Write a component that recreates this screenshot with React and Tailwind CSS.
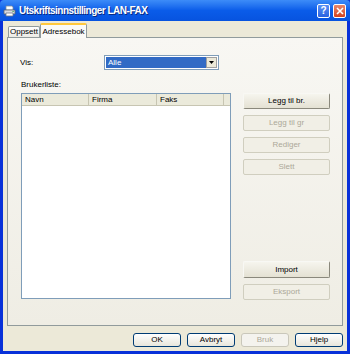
import React from 'react';

const font = { fontFamily: '"Liberation Sans", Arial, sans-serif' };

const PrinterIcon = () => (
  <svg width="13" height="12" viewBox="0 0 13 12">
    <path d="M3 1h6l1 1v3H3z" fill="#fff" stroke="#7a8aa0" strokeWidth="0.8" />
    <path d="M1 5h11v4H1z" fill="#d7dbe2" stroke="#5b6472" strokeWidth="0.8" />
    <path d="M3 8h7v3H3z" fill="#fff" stroke="#6c7685" strokeWidth="0.8" />
    <rect x="9.5" y="6" width="1.2" height="1" fill="#3fa33f" />
  </svg>
);

const XpButton = ({ children, disabled, className = '' }) => (
  <div
    className={`flex items-center justify-center rounded-[2px] border text-[8px] leading-none ${
      disabled
        ? 'border-[#d0cebf] text-[#aca899] bg-[#f1efe6]'
        : 'border-t-[#f8f8f4] border-l-[#f8f8f4] border-b-[#8a887c] border-r-[#8a887c] text-black bg-gradient-to-b from-[#f6f5ee] to-[#e4e1d3]'
    } ${className}`}
  >
    {children}
  </div>
);

const DialogButton = ({ children, disabled }) => (
  <div
    className={`flex h-[14px] w-[48px] items-center justify-center rounded-[3px] border text-[8px] leading-none ${
      disabled
        ? 'border-[#c9c7ba] text-[#aca899] bg-[#f4f3ee]'
        : 'border-[#003c74] text-black bg-gradient-to-b from-[#ffffff] to-[#e8e6dc]'
    }`}
  >
    {children}
  </div>
);

export default function App() {
  return (
    <div className="flex h-[354px] w-[350px] flex-col overflow-hidden bg-[#0831d9]" style={font}>
      {/* title bar */}
      <div className="flex h-[21px] items-center rounded-t-[4px] bg-gradient-to-b from-[#3d8cf8] via-[#0a5ce9] to-[#0753df] pl-[3px] pr-[4px]">
        <PrinterIcon />
        <span className="ml-[3px] text-[10px] font-bold tracking-[-0.5px] text-white [text-shadow:1px_1px_0_#0a2a80]">
          Utskriftsinnstillinger LAN-FAX
        </span>
        <div className="ml-auto flex gap-[3px]">
          <div className="flex h-[14px] w-[13px] items-center justify-center rounded-[2px] border border-white bg-gradient-to-b from-[#5a90f5] to-[#2b62e0] text-[10px] font-bold leading-none text-white">
            ?
          </div>
          <div className="flex h-[14px] w-[13px] items-center justify-center rounded-[2px] border border-white bg-gradient-to-b from-[#e8876b] to-[#d2411c]">
            <svg width="8" height="8" viewBox="0 0 8 8">
              <path d="M1 1l6 6M7 1L1 7" stroke="#fff" strokeWidth="1.6" />
            </svg>
          </div>
        </div>
      </div>

      {/* body */}
      <div className="mx-[3px] mb-[3px] flex flex-1 flex-col bg-[#ece9d8] pt-[2px]">
        {/* tabs */}
        <div className="relative z-10 flex h-[14px] items-end pl-[5px]">
          <div className="flex h-[11px] w-[32px] items-center justify-center rounded-t-[2px] border border-b-0 border-[#919b9c] bg-gradient-to-b from-[#fefefe] to-[#ecebe5] text-[8px] leading-none">
            Oppsett
          </div>
          <div className="-mb-px flex h-[15px] w-[47px] items-center justify-center rounded-t-[2px] border-x border-[#919b9c] border-t-2 border-t-[#ffc83c] bg-[#fafaf7] text-[8px] leading-none">
            Adressebok
          </div>
        </div>

        {/* tab page */}
        <div className="ml-[4px] flex h-[289px] w-[336px] flex-col border border-[#919b9c] bg-gradient-to-b from-[#f8f7f3] to-[#efede4]">
          <div className="mt-[17px] flex items-center">
            <span className="ml-[12px] w-[84px] text-[8px] leading-none">Vis:</span>
            <div className="flex h-[15px] w-[115px] items-center border border-[#7f9db9] bg-white p-px">
              <div className="flex h-full flex-1 items-center bg-[#316ac5] pl-[2px] text-[8px] leading-none text-white">
                Alle
              </div>
              <div className="flex h-full w-[11px] items-center justify-center border border-[#a0a0a0] bg-[#ece9d8]">
                <svg width="5" height="3" viewBox="0 0 5 3">
                  <path d="M0 0h5L2.5 3z" fill="#000" />
                </svg>
              </div>
            </div>
          </div>

          <div className="ml-[13px] mt-[10px] h-[10px] text-[8px] leading-[10px]">Brukerliste:</div>

          <div className="mt-[3px] flex">
            <div className="ml-[13px] flex h-[206px] w-[210px] flex-col border border-[#7f9db9] bg-white">
              <div className="flex h-[12px] text-[8px] leading-none">
                <div className="flex w-[67px] items-center border-b border-r border-[#c7c5b2] bg-[#ebeadb] pl-[3px]">Navn</div>
                <div className="flex w-[68px] items-center border-b border-r border-[#c7c5b2] bg-[#ebeadb] pl-[3px]">Firma</div>
                <div className="flex w-[67px] items-center border-b border-r border-[#c7c5b2] bg-[#ebeadb] pl-[3px]">Faks</div>
                <div className="flex-1 border-b border-[#c7c5b2] bg-[#ebeadb]" />
              </div>
            </div>

            <div className="ml-[12px] flex h-[207px] w-[87px] flex-col justify-between">
              <div className="flex flex-col gap-[6px]">
                <XpButton className="h-[16px]">Legg til br.</XpButton>
                <XpButton className="h-[16px]" disabled>Legg til gr</XpButton>
                <XpButton className="h-[16px]" disabled>Rediger</XpButton>
                <XpButton className="h-[16px]" disabled>Slett</XpButton>
              </div>
              <div className="flex flex-col gap-[6px]">
                <XpButton className="h-[17px]">Import</XpButton>
                <XpButton className="h-[16px]" disabled>Eksport</XpButton>
              </div>
            </div>
          </div>
        </div>

        {/* dialog buttons */}
        <div className="mt-[7px] flex justify-end gap-[6px] pr-[4px]">
          <DialogButton>OK</DialogButton>
          <DialogButton>Avbryt</DialogButton>
          <DialogButton disabled>Bruk</DialogButton>
          <DialogButton>Hjelp</DialogButton>
        </div>
      </div>
    </div>
  );
}
